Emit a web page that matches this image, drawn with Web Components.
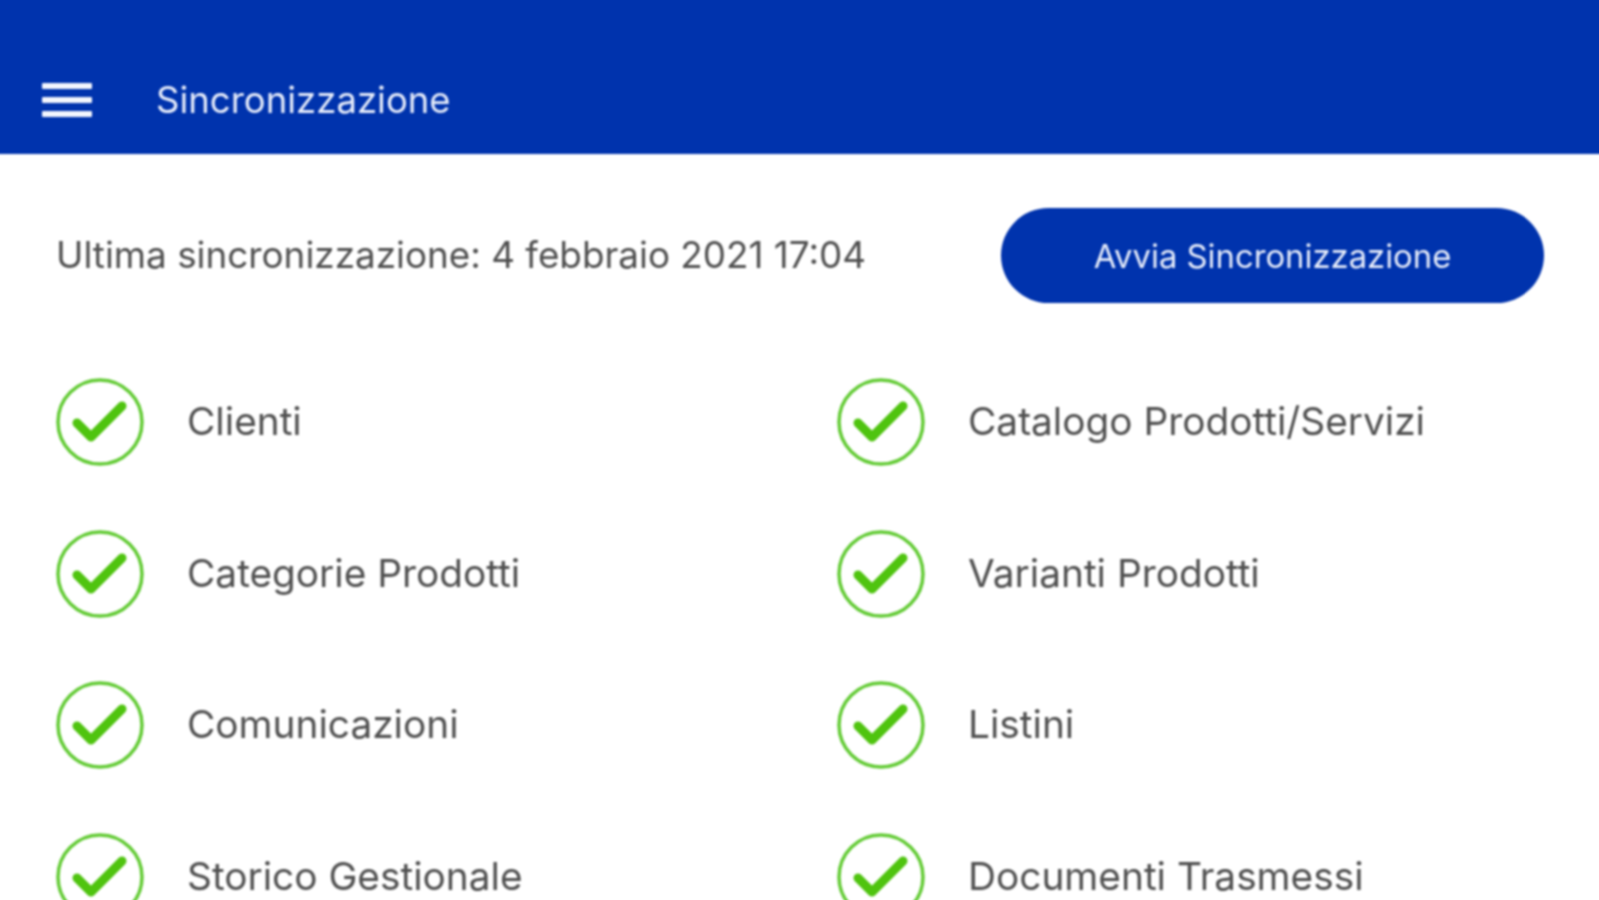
<!DOCTYPE html>
<html lang="it">
<head>
<meta charset="utf-8">
<title>Sincronizzazione</title>
<style>
  html, body { margin: 0; height: 100%; overflow: hidden; background: #fff; }
  body { font-family: Inter, "Liberation Sans", sans-serif; }
</style>
</head>
<body>
<sync-page></sync-page>

<script>
class AppBar extends HTMLElement {
  constructor() {
    super();
    this.attachShadow({ mode: "open" }).innerHTML = `
      <style>
        :host {
          display: flex;
          align-items: center;
          box-sizing: border-box;
          height: 160px;
          padding: 52px 0 0 48px;
          background: #0033ad;
          color: #fff;
        }
        svg { width: 50px; height: 34px; flex: none; }
        .title { margin-left: 64px; font-size: 36.5px; color: #e6ecfa; }
      </style>
      <svg viewBox="0 0 50 34" fill="#f2f5fd">
        <rect y="0" width="50" height="6" rx="1"/>
        <rect y="14" width="50" height="6" rx="1"/>
        <rect y="28" width="50" height="6" rx="1"/>
      </svg>
      <span class="title"><slot></slot></span>`;
  }
}

class SyncStatus extends HTMLElement {
  constructor() {
    super();
    this.attachShadow({ mode: "open" }).innerHTML = `
      <style>
        :host {
          display: flex;
          align-items: center;
          justify-content: space-between;
          height: 95px;
          margin: 54px 61px 0 62px;
          color: #505050;
          font-size: 36.85px;
        }
        span { margin-bottom: 2px; }
        button {
          width: 543px;
          height: 95px;
          border: 0;
          border-radius: 48px;
          background: #0033ad;
          color: #e6ecfa;
          font: inherit;
          font-size: 32.8px;
        }
      </style>
      <span><slot></slot></span>
      <button>${this.getAttribute("action")}</button>`;
  }
}

class SyncItem extends HTMLElement {
  constructor() {
    super();
    this.attachShadow({ mode: "open" }).innerHTML = `
      <style>
        :host {
          display: flex;
          align-items: center;
          gap: 43px;
          height: 151.6px;
          color: #505050;
          font-size: 38.8px;
        }
        svg { width: 88px; height: 88px; flex: none; }
        span { margin-bottom: 3px; }
      </style>
      <svg viewBox="0 0 88 88" fill="none">
        <circle cx="44" cy="44" r="42" stroke="#63cb35" stroke-width="3.5"/>
        <path d="M21 45 L35 59 L66 28" stroke="#4fc40f" stroke-width="9" stroke-linecap="round" stroke-linejoin="round"/>
      </svg>
      <span><slot></slot></span>`;
  }
}

class SyncGrid extends HTMLElement {
  constructor() {
    super();
    this.attachShadow({ mode: "open" }).innerHTML = `
      <style>
        :host {
          display: grid;
          grid-template-columns: 781px 1fr;
          margin: 43.5px 0 0 62px;
        }
      </style>
      <slot></slot>`;
  }
}

// margin pulls the box past the window so the blur does not fade the page edges
class SyncPage extends HTMLElement {
  constructor() {
    super();
    this.attachShadow({ mode: "open" }).innerHTML = `
      <style>
        :host { display: block; height: 912px; margin: -6px; overflow: hidden; filter: blur(1.1px); }
      </style>
      <app-bar>Sincronizzazione</app-bar>
      <sync-status action="Avvia Sincronizzazione">Ultima sincronizzazione: 4 febbraio 2021 17:04</sync-status>
      <sync-grid>
        <sync-item>Clienti</sync-item>
        <sync-item>Catalogo Prodotti/Servizi</sync-item>
        <sync-item>Categorie Prodotti</sync-item>
        <sync-item>Varianti Prodotti</sync-item>
        <sync-item>Comunicazioni</sync-item>
        <sync-item>Listini</sync-item>
        <sync-item>Storico Gestionale</sync-item>
        <sync-item>Documenti Trasmessi</sync-item>
      </sync-grid>`;
  }
}

customElements.define("app-bar", AppBar);
customElements.define("sync-status", SyncStatus);
customElements.define("sync-item", SyncItem);
customElements.define("sync-grid", SyncGrid);
customElements.define("sync-page", SyncPage);
</script>
</body>
</html>
